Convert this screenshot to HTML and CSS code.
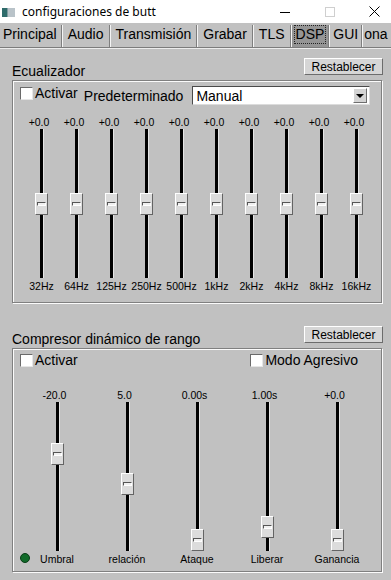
FILE: index.html
```html
<!DOCTYPE html>
<html lang="es">
<head>
    <meta charset="UTF-8">
    <meta name="viewport" content="width=device-width, initial-scale=1.0">
    <title>configuraciones de butt</title>
    <link rel="stylesheet" href="styles.css">
</head>
<body>
    <div class="window">
        <div class="titlebar">
            <svg class="app-icon" width="13" height="9" viewBox="0 0 13 9">
                <rect x="0" y="0" width="13" height="9" fill="#b9c3c9"/>
                <rect x="0" y="0" width="5" height="9" fill="#2e6b6b"/>
                <rect x="5" y="0" width="1" height="9" fill="#7f9a9e"/>
            </svg>
            <span class="title">configuraciones de butt</span>
            <div class="controls">
                <span class="ctl"><svg width="10" height="10" viewBox="0 0 10 10"><path d="M0 5.5h10" stroke="#000" stroke-width="1"/></svg></span>
                <span class="ctl"><svg width="10" height="10" viewBox="0 0 10 10"><rect x="0.5" y="0.5" width="9" height="9" fill="none" stroke="#cfcfcf"/></svg></span>
                <span class="ctl"><svg width="11" height="11" viewBox="0 0 11 11"><path d="M0.5 0.5l10 10M10.5 0.5l-10 10" stroke="#000" stroke-width="1"/></svg></span>
            </div>
        </div>

        <div class="tabs">
            <div class="tab first">Principal</div>
            <div class="tab">Audio</div>
            <div class="tab">Transmisión</div>
            <div class="tab">Grabar</div>
            <div class="tab">TLS</div>
            <div class="tab active"><span>DSP</span></div>
            <div class="tab narrow">GUI</div>
            <div class="tab cut">ona</div>
        </div>

        <div class="panel">
            <!-- ecualizador -->
            <div class="group-head">
                <span class="group-title">Ecualizador</span>
                <button class="btn">Restablecer</button>
            </div>
            <div class="groupbox eq">
                <div class="eq-top">
                    <label class="check"><input type="checkbox">Activar</label>
                    <span class="preset-label">Predeterminado</span>
                    <div class="dropdown"><span>Manual</span><span class="drop-btn"></span></div>
                </div>
                <div class="sliders eq-sliders">
                    <div class="slider"><span class="val">+0.0</span><div class="track"><div class="knob" style="top:64px"></div></div><span class="cap">32Hz</span></div>
                    <div class="slider"><span class="val">+0.0</span><div class="track"><div class="knob" style="top:64px"></div></div><span class="cap">64Hz</span></div>
                    <div class="slider"><span class="val">+0.0</span><div class="track"><div class="knob" style="top:64px"></div></div><span class="cap">125Hz</span></div>
                    <div class="slider"><span class="val">+0.0</span><div class="track"><div class="knob" style="top:64px"></div></div><span class="cap">250Hz</span></div>
                    <div class="slider"><span class="val">+0.0</span><div class="track"><div class="knob" style="top:64px"></div></div><span class="cap">500Hz</span></div>
                    <div class="slider"><span class="val">+0.0</span><div class="track"><div class="knob" style="top:64px"></div></div><span class="cap">1kHz</span></div>
                    <div class="slider"><span class="val">+0.0</span><div class="track"><div class="knob" style="top:64px"></div></div><span class="cap">2kHz</span></div>
                    <div class="slider"><span class="val">+0.0</span><div class="track"><div class="knob" style="top:64px"></div></div><span class="cap">4kHz</span></div>
                    <div class="slider"><span class="val">+0.0</span><div class="track"><div class="knob" style="top:64px"></div></div><span class="cap">8kHz</span></div>
                    <div class="slider"><span class="val">+0.0</span><div class="track"><div class="knob" style="top:64px"></div></div><span class="cap">16kHz</span></div>
                </div>
            </div>

            <!-- compresor -->
            <div class="group-head comp-head">
                <span class="group-title">Compresor dinámico de rango</span>
                <button class="btn">Restablecer</button>
            </div>
            <div class="groupbox comp">
                <div class="comp-top">
                    <label class="check"><input type="checkbox">Activar</label>
                    <label class="check"><input type="checkbox">Modo Agresivo</label>
                </div>
                <div class="sliders comp-sliders">
                    <div class="slider"><span class="val">-20.0</span><div class="track"><div class="knob" style="top:41px"></div></div><span class="cap">Umbral</span></div>
                    <div class="slider"><span class="val">5.0</span><div class="track"><div class="knob" style="top:71px"></div></div><span class="cap">relación</span></div>
                    <div class="slider"><span class="val">0.00s</span><div class="track"><div class="knob" style="top:127px"></div></div><span class="cap">Ataque</span></div>
                    <div class="slider"><span class="val">1.00s</span><div class="track"><div class="knob" style="top:114px"></div></div><span class="cap">Liberar</span></div>
                    <div class="slider"><span class="val">+0.0</span><div class="track"><div class="knob" style="top:127px"></div></div><span class="cap">Ganancia</span></div>
                </div>
                <span class="led"></span>
            </div>
        </div>
    </div>
</body>
</html>
```

FILE: styles.css
```css
body {
    margin: 0;
    background-color: #c1c1c1;
    font-family: "Liberation Sans", Arial, sans-serif;
    color: #000;
}

.window {
    width: 391px;
    height: 580px;
    overflow: hidden;
}

.titlebar {
    height: 23px;
    background-color: #fff;
    display: flex;
    align-items: center;
}

.app-icon {
    margin-left: 2px;
    margin-top: 1px;
}

.title {
    margin-left: 7px;
    font-family: "Noto Sans", sans-serif;
    font-size: 12px;
}

.controls {
    margin-left: auto;
    margin-right: -6px;
    display: flex;
}

.ctl {
    width: 45px;
    height: 23px;
    display: flex;
    align-items: center;
    justify-content: center;
}

.tabs {
    display: flex;
    align-items: flex-end;
    height: 24px;
    border-bottom: 1px solid #7c7c7c;
    box-shadow: 0 1px 0 #ececec;
    overflow: hidden;
}

.tab {
    height: 22px;
    line-height: 19px;
    font-size: 14px;
    padding: 0 5px;
    border-left: 1px solid #f4f4f4;
    border-right: 1px solid #7e7e7e;
    white-space: nowrap;
    box-sizing: border-box;
    flex-shrink: 0;
}

.tab.first {
    border-left: 0;
    padding-left: 3px;
    padding-right: 4px;
}

.tab.active {
    background-color: #959595;
    padding: 1px 3px 0;
    line-height: 17px;
}

.tab.active span {
    outline: 1px dotted #222;
    display: inline-block;
    padding: 0 1px;
    line-height: 17px;
}

.tab.narrow {
    padding: 0 3px;
}

.tab.cut {
    padding: 0 0 0 1px;
    border-right: 0;
    flex-shrink: 1;
}

.panel {
    padding: 10px 8px 0 12px;
}

.group-head {
    display: flex;
    justify-content: space-between;
    height: 22px;
}

.comp-head {
    margin-top: 23px;
}

.group-title {
    align-self: flex-end;
    font-size: 14px;
    line-height: 16px;
    margin-bottom: 1px;
}

.btn {
    width: 79px;
    height: 17px;
    padding: 0;
    font-family: "Liberation Sans", Arial, sans-serif;
    font-size: 12px;
    line-height: 14px;
    color: #000;
    background-color: #d6d6d6;
    border: 1px solid;
    border-color: #fff #6c6c6c #6c6c6c #fff;
}

.groupbox {
    position: relative;
    width: 370px;
    box-sizing: border-box;
    border: 1px solid #808080;
    box-shadow: inset 1px 1px 0 #fbfbfb, 1px 1px 0 #fbfbfb;
}

.groupbox.eq {
    height: 223px;
    padding: 5px 0 0 7px;
}

.groupbox.comp {
    height: 224px;
    padding: 3px 0 0 7px;
}

.check {
    display: flex;
    align-items: center;
    gap: 2px;
    font-size: 14px;
    line-height: 16px;
}

.check input {
    appearance: none;
    -webkit-appearance: none;
    margin: 0;
    width: 13px;
    height: 13px;
    box-sizing: border-box;
    background-color: #fff;
    border: 1px solid;
    border-color: #6a6a6a #e6e6e6 #e6e6e6 #6a6a6a;
}

.eq-top {
    display: flex;
    align-items: flex-start;
    height: 19px;
}

.eq-top .check {
    margin-top: -1px;
}

.preset-label {
    margin: 2px 0 0 6px;
    font-size: 14px;
    line-height: 16px;
}

.dropdown {
    margin-left: 9px;
    width: 178px;
    height: 19px;
    box-sizing: border-box;
    padding-left: 3px;
    background-color: #fff;
    border: 1px solid;
    border-color: #4a4a4a #dcdcdc #dcdcdc #4a4a4a;
    display: flex;
    align-items: center;
    justify-content: space-between;
    font-size: 14px;
    line-height: 16px;
}

.drop-btn {
    width: 14px;
    height: 15px;
    margin-right: 2px;
    box-sizing: border-box;
    background-color: #d4d4d4;
    border: 1px solid;
    border-color: #fff #6e6e6e #6e6e6e #fff;
    display: flex;
    align-items: center;
    justify-content: center;
}

.drop-btn::after {
    content: '';
    border-left: 4px solid transparent;
    border-right: 4px solid transparent;
    border-top: 4px solid #000;
}

.comp-top {
    display: flex;
    justify-content: space-between;
    padding-right: 23px;
}

.sliders {
    display: flex;
}

.slider {
    flex-shrink: 0;
    display: flex;
    flex-direction: column;
    align-items: center;
}

.eq-sliders {
    margin: 11px 0 0 4px;
}

.eq-sliders .slider {
    width: 35px;
}

.comp-sliders {
    margin: 21px 0 0 2px;
}

.comp-sliders .slider {
    width: 70px;
}

.val,
.cap {
    font-size: 10.5px;
    line-height: 13px;
    white-space: nowrap;
}

.val {
    margin-right: 5px;
}

.cap {
    margin-top: 2px;
}

.track {
    position: relative;
    width: 3px;
    height: 149px;
    background-color: #000;
    box-shadow: 1px 0 0 #e4e4e4;
}

.knob {
    position: absolute;
    left: -5px;
    width: 13px;
    height: 22px;
    box-sizing: border-box;
    background-color: #dcdcdc;
    border: 1px solid;
    border-color: #fff #646464 #646464 #fff;
}

.knob::after {
    content: '';
    position: absolute;
    left: 1px;
    top: 8px;
    width: 7px;
    height: 2px;
    border: 1px solid;
    border-color: #555 #fff #fff #555;
    background-color: #f0f0f0;
}

.led {
    position: absolute;
    left: 7px;
    bottom: 8px;
    width: 10px;
    height: 10px;
    box-sizing: border-box;
    border-radius: 50%;
    background-color: #126b2a;
    border: 1px solid #0a3d17;
}
```
